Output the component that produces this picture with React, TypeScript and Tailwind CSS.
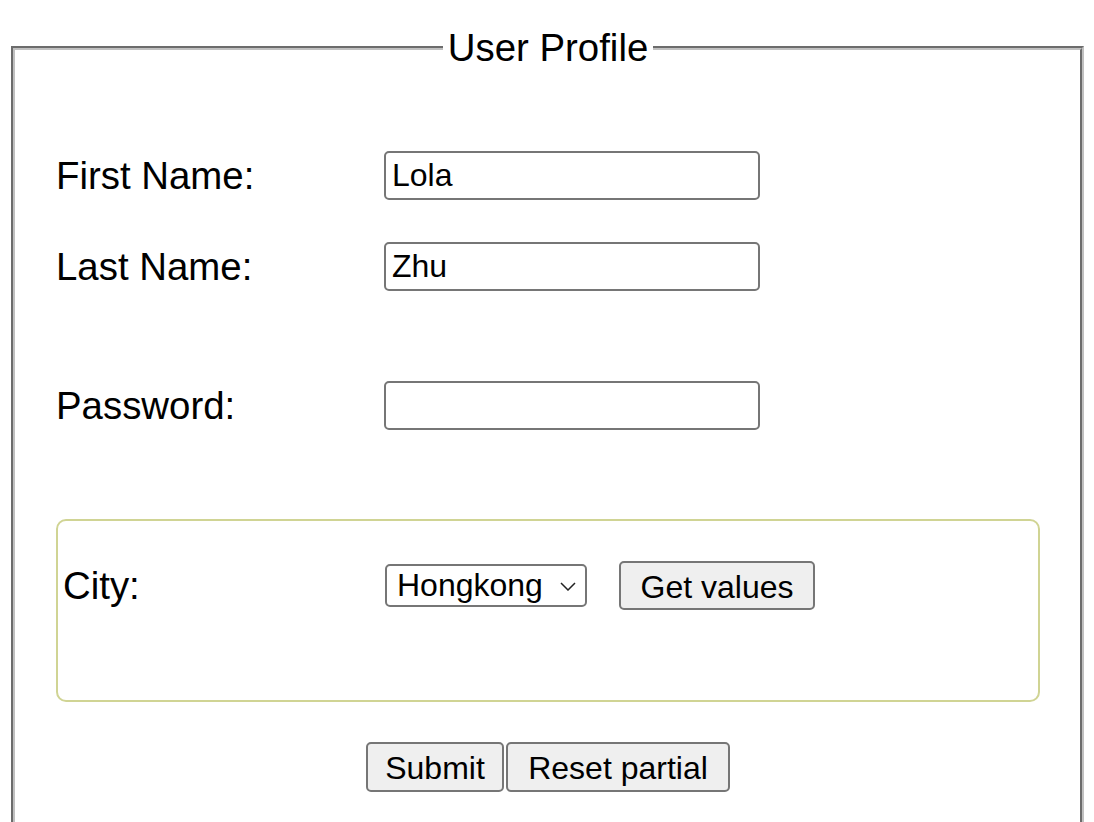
import { useState } from 'react';

const FONT = { fontFamily: '"Liberation Sans", Arial, sans-serif' };

function TextRow({ label, value, type = 'text', className = '' }: { label: string; value: string; type?: string; className?: string }) {
  const [val, setVal] = useState(value);
  return (
    <div className={`flex items-center h-[49px] ${className}`}>
      <label className="w-[328px] text-[38.4px] leading-[44px] text-black">{label}</label>
      <input
        type={type}
        value={val}
        onChange={(e) => setVal(e.target.value)}
        className="w-[376px] h-[49px] border-2 border-[#767676] rounded-[5px] bg-white pl-[6px] text-[32px] text-black outline-none"
      />
    </div>
  );
}

export default function App() {
  const [city, setCity] = useState('Hongkong');

  return (
    <div className="bg-white min-h-[822px] pt-[26px] overflow-hidden" style={FONT}>
      <fieldset className="ml-[11px] mr-[10px] border-4 [border-style:groove] border-[#c0c0c0] pl-[41px] pr-[40px] pb-[40px]">
        <legend className="mx-auto px-[5px] text-[38.4px] leading-[44px] text-black">User Profile</legend>

        <TextRow label="First Name:" value="Lola" className="mt-[81px]" />
        <TextRow label="Last Name:" value="Zhu" className="mt-[42px]" />
        <TextRow label="Password:" value="" type="password" className="mt-[90px]" />

        <div className="mt-[89px] h-[183px] border-2 border-[#d0d494] rounded-[10px] pl-[5px] pt-[40px]">
          <div className="flex items-center h-[49px]">
            <label className="w-[322px] text-[38.4px] leading-[44px] text-black">City:</label>
            <div className="relative">
              <select
                value={city}
                onChange={(e) => setCity(e.target.value)}
                className="appearance-none w-[202px] h-[43px] border-2 border-[#767676] rounded-[5px] bg-white pl-[10px] text-[32px] leading-[37px] text-black outline-none"
              >
                <option>Hongkong</option>
                <option>Beijing</option>
                <option>Shanghai</option>
              </select>
              <svg className="absolute right-[11px] top-[18px] pointer-events-none" width="16" height="9" viewBox="0 0 16 9" fill="none">
                <polyline points="1,1 8,8 15,1" stroke="#222" strokeWidth="1.5" />
              </svg>
            </div>
            <button className="ml-[32px] w-[196px] h-[49px] border-2 border-[#767676] rounded-[5px] bg-[#efefef] text-[32px] text-black">
              Get values
            </button>
          </div>
        </div>

        <div className="mt-[40px] flex justify-center gap-[2px]">
          <button className="w-[138px] h-[50px] border-2 border-[#767676] rounded-[5px] bg-[#efefef] text-[32px] text-black">
            Submit
          </button>
          <button className="w-[224px] h-[50px] border-2 border-[#767676] rounded-[5px] bg-[#efefef] text-[32px] text-black">
            Reset partial
          </button>
        </div>
      </fieldset>
    </div>
  );
}
